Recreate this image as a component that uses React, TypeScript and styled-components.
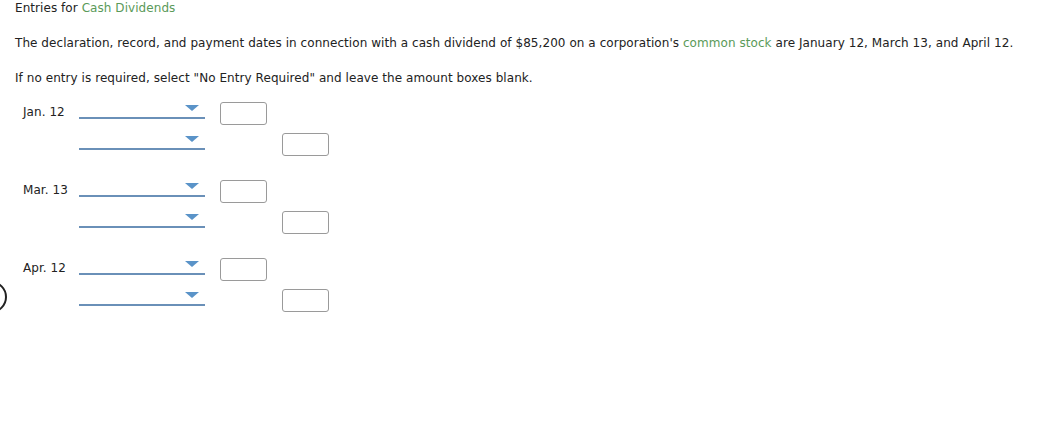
import styled, { createGlobalStyle } from "styled-components";

const GlobalStyle = createGlobalStyle`
  body {
    margin: 0;
    background: #ffffff;
    font-family: "DejaVu Sans", Verdana, sans-serif;
    color: #222222;
  }
`;

const entries = ["Jan. 12", "Mar. 13", "Apr. 12"];

function App() {
  return (
    <Page>
      <GlobalStyle />
      <Heading>
        Entries for <Link>Cash Dividends</Link>
      </Heading>
      <Para>
        The declaration, record, and payment dates in connection with a cash
        dividend of $85,200 on a corporation's <Link>common stock</Link> are
        January 12, March 13, and April 12.
      </Para>
      <Para>
        If no entry is required, select "No Entry Required" and leave the
        amount boxes blank.
      </Para>
      <Groups>
        {entries.map((date) => (
          <Group key={date}>
            <DateLabel>{date}</DateLabel>
            <Select>
              <Caret />
            </Select>
            <Amount $col={3} />
            <span />
            <Select>
              <Caret />
            </Select>
            <Amount $col={4} />
          </Group>
        ))}
      </Groups>
      <Ring />
    </Page>
  );
}

export default App;

const Page = styled.div`
  position: relative;
  width: 1043px;
  height: 447px;
  overflow: hidden;
  padding-left: 15px;
  box-sizing: border-box;
  font-size: 12px;
  letter-spacing: 0.06px;
  line-height: 16px;
`;

const Heading = styled.div`
  margin: 0;
  height: 16px;
`;

const Para = styled.p`
  margin: 19px 0 0;
  white-space: nowrap;
`;

const Link = styled.span`
  color: #5a9a59;
`;

const Groups = styled.div`
  display: flex;
  flex-direction: column;
  gap: 16px;
  margin-top: 12px;
  padding-left: 8px;
`;

const Group = styled.div`
  display: grid;
  grid-template-columns: 56px 126px 15px 47px 15px 47px;
  grid-template-rows: 31px 31px;
  align-items: start;
`;

const DateLabel = styled.div`
  grid-column: 1;
  padding-top: 6px;
`;

const Select = styled.div`
  grid-column: 2;
  height: 19px;
  border-bottom: 2px solid #6a90b8;
  display: flex;
  justify-content: flex-end;
  align-items: center;
  padding-right: 6px;
`;

const Caret = styled.div`
  width: 0;
  height: 0;
  border-left: 7px solid transparent;
  border-right: 7px solid transparent;
  border-top: 6px solid #5a93c8;
`;

const Amount = styled.div<{ $col: number }>`
  grid-column: ${(p) => (p.$col === 3 ? 4 : 6)};
  margin-top: 4px;
  height: 23px;
  box-sizing: border-box;
  border: 1px solid #9a9a9a;
  border-radius: 3px;
  background: #ffffff;
`;

const Ring = styled.div`
  position: absolute;
  left: -25px;
  top: 281px;
  width: 32px;
  height: 32px;
  box-sizing: border-box;
  border: 2px solid #222222;
  border-radius: 50%;
`;
